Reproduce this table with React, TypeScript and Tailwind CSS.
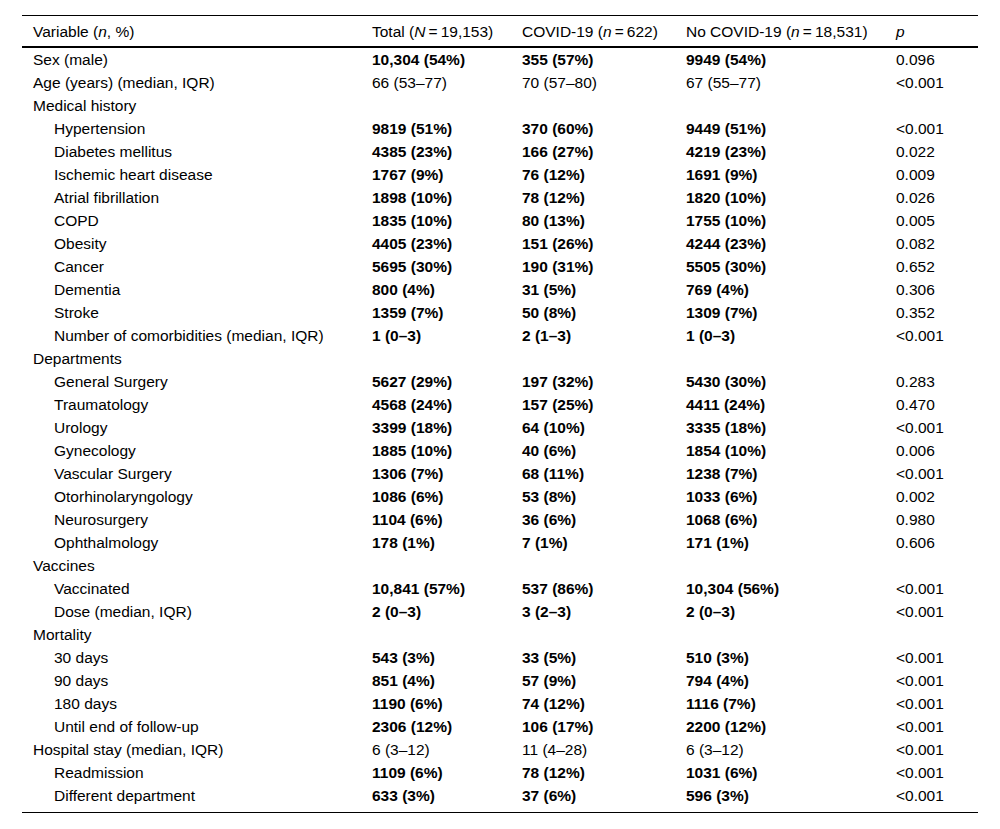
import React from "react";

type Row = {
  label: string;
  indent?: boolean;
  bold?: boolean;
  vals?: [string, string, string, string];
};

const rows: Row[] = [
  { label: "Sex (male)", bold: true, vals: ["10,304 (54%)", "355 (57%)", "9949 (54%)", "0.096"] },
  { label: "Age (years) (median, IQR)", vals: ["66 (53–77)", "70 (57–80)", "67 (55–77)", "<0.001"] },
  { label: "Medical history" },
  { label: "Hypertension", indent: true, bold: true, vals: ["9819 (51%)", "370 (60%)", "9449 (51%)", "<0.001"] },
  { label: "Diabetes mellitus", indent: true, bold: true, vals: ["4385 (23%)", "166 (27%)", "4219 (23%)", "0.022"] },
  { label: "Ischemic heart disease", indent: true, bold: true, vals: ["1767 (9%)", "76 (12%)", "1691 (9%)", "0.009"] },
  { label: "Atrial fibrillation", indent: true, bold: true, vals: ["1898 (10%)", "78 (12%)", "1820 (10%)", "0.026"] },
  { label: "COPD", indent: true, bold: true, vals: ["1835 (10%)", "80 (13%)", "1755 (10%)", "0.005"] },
  { label: "Obesity", indent: true, bold: true, vals: ["4405 (23%)", "151 (26%)", "4244 (23%)", "0.082"] },
  { label: "Cancer", indent: true, bold: true, vals: ["5695 (30%)", "190 (31%)", "5505 (30%)", "0.652"] },
  { label: "Dementia", indent: true, bold: true, vals: ["800 (4%)", "31 (5%)", "769 (4%)", "0.306"] },
  { label: "Stroke", indent: true, bold: true, vals: ["1359 (7%)", "50 (8%)", "1309 (7%)", "0.352"] },
  { label: "Number of comorbidities (median, IQR)", indent: true, bold: true, vals: ["1 (0–3)", "2 (1–3)", "1 (0–3)", "<0.001"] },
  { label: "Departments" },
  { label: "General Surgery", indent: true, bold: true, vals: ["5627 (29%)", "197 (32%)", "5430 (30%)", "0.283"] },
  { label: "Traumatology", indent: true, bold: true, vals: ["4568 (24%)", "157 (25%)", "4411 (24%)", "0.470"] },
  { label: "Urology", indent: true, bold: true, vals: ["3399 (18%)", "64 (10%)", "3335 (18%)", "<0.001"] },
  { label: "Gynecology", indent: true, bold: true, vals: ["1885 (10%)", "40 (6%)", "1854 (10%)", "0.006"] },
  { label: "Vascular Surgery", indent: true, bold: true, vals: ["1306 (7%)", "68 (11%)", "1238 (7%)", "<0.001"] },
  { label: "Otorhinolaryngology", indent: true, bold: true, vals: ["1086 (6%)", "53 (8%)", "1033 (6%)", "0.002"] },
  { label: "Neurosurgery", indent: true, bold: true, vals: ["1104 (6%)", "36 (6%)", "1068 (6%)", "0.980"] },
  { label: "Ophthalmology", indent: true, bold: true, vals: ["178 (1%)", "7 (1%)", "171 (1%)", "0.606"] },
  { label: "Vaccines" },
  { label: "Vaccinated", indent: true, bold: true, vals: ["10,841 (57%)", "537 (86%)", "10,304 (56%)", "<0.001"] },
  { label: "Dose (median, IQR)", indent: true, bold: true, vals: ["2 (0–3)", "3 (2–3)", "2 (0–3)", "<0.001"] },
  { label: "Mortality" },
  { label: "30 days", indent: true, bold: true, vals: ["543 (3%)", "33 (5%)", "510 (3%)", "<0.001"] },
  { label: "90 days", indent: true, bold: true, vals: ["851 (4%)", "57 (9%)", "794 (4%)", "<0.001"] },
  { label: "180 days", indent: true, bold: true, vals: ["1190 (6%)", "74 (12%)", "1116 (7%)", "<0.001"] },
  { label: "Until end of follow-up", indent: true, bold: true, vals: ["2306 (12%)", "106 (17%)", "2200 (12%)", "<0.001"] },
  { label: "Hospital stay (median, IQR)", vals: ["6 (3–12)", "11 (4–28)", "6 (3–12)", "<0.001"] },
  { label: "Readmission", indent: true, bold: true, vals: ["1109 (6%)", "78 (12%)", "1031 (6%)", "<0.001"] },
  { label: "Different department", indent: true, bold: true, vals: ["633 (3%)", "37 (6%)", "596 (3%)", "<0.001"] },
];

const grid = "grid grid-cols-[339px_150px_164px_210px_82px]";

export default function App() {
  return (
    <div
      className="bg-white w-[1000px] h-[829px] pt-[15px] pl-[22px] text-black text-[15.5px] leading-[23px]"
      style={{ fontFamily: '"Liberation Sans", Arial, sans-serif' }}
    >
      <div className="w-[956px] border-t border-b border-black pb-[5px]">
        <div className={`${grid} pl-[11px] h-[32px] items-center border-b-2 border-black`}>
          <div>
            Variable (<i>n</i>, %)
          </div>
          <div>
            Total (<i>N</i>&thinsp;=&thinsp;19,153)
          </div>
          <div>
            COVID-19 (<i>n</i>&thinsp;=&thinsp;622)
          </div>
          <div>
            No COVID-19 (<i>n</i>&thinsp;=&thinsp;18,531)
          </div>
          <div>
            <i>p</i>
          </div>
        </div>
        {rows.map((r, i) => (
          <div key={i} className={`${grid} pl-[11px] h-[23px] items-center`}>
            <div className={r.indent ? "pl-[21px]" : ""}>{r.label}</div>
            {r.vals ? (
              <>
                <div className={r.bold ? "font-bold" : ""}>{r.vals[0]}</div>
                <div className={r.bold ? "font-bold" : ""}>{r.vals[1]}</div>
                <div className={r.bold ? "font-bold" : ""}>{r.vals[2]}</div>
                <div>{r.vals[3]}</div>
              </>
            ) : (
              <>
                <div />
                <div />
                <div />
                <div />
              </>
            )}
          </div>
        ))}
      </div>
    </div>
  );
}
